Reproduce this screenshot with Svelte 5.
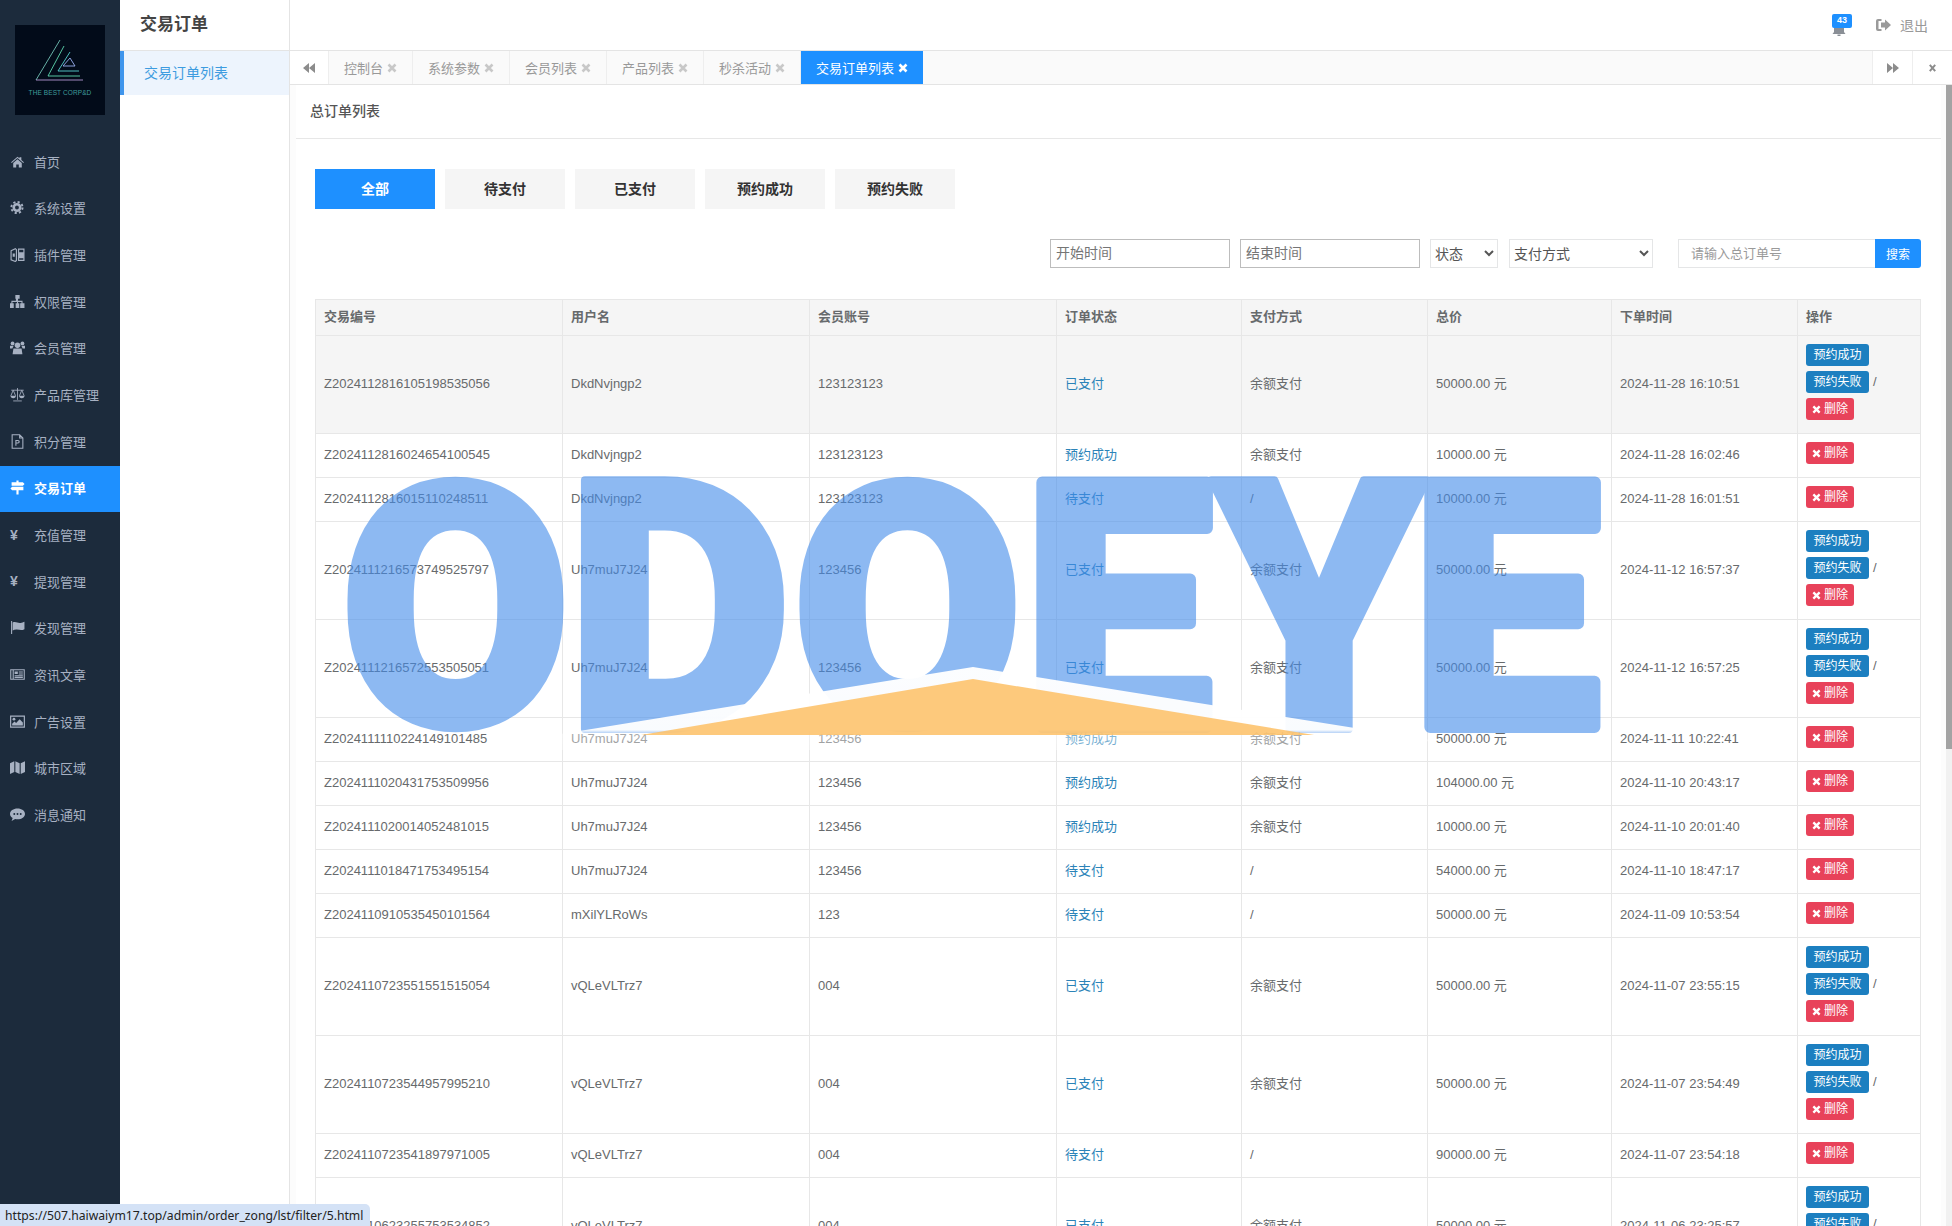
<script>
  const icons = {
    home: '<path d="M1 7.600 7 2.500l1.800 1.500V3h1.800v2.600L13 7.600l-.6.700L7 3.800 1.600 8.300z"/><path d="M3 8.400 7 5l4 3.400V12.500H8.200V9.700H5.800v2.800H3z"/>',
    cog: '<circle cx="6.500" cy="7" r="3" fill="none" stroke="currentColor" stroke-width="2.400"/><circle cx="6.500" cy="7" r="5.200" fill="none" stroke="currentColor" stroke-width="1.800" stroke-dasharray="2 2.080"/>',
    plug: '<path d="M1 3.500 5 1.500l1 1v10l-1 1-4-1.500z M8 2h5v10.500H8z" fill="none" stroke="currentColor" stroke-width="1.100"/><path d="M8 5h5v5.500H8z M2.500 6h2v3h-2z"/>',
    sitemap: '<path d="M5 1h4v3.400H7.500v2h4.200v2.200h1.800V13h-4V8.600h1.200V7.400H7.500v1.200h1.200V13H5.300V8.600h1.200V7.400H2.300v1.200h1.200V13h-4V8.600h1.800V6.400h4.200v-2H5z"/>',
    users: '<circle cx="7" cy="5" r="2.600"/><circle cx="2.400" cy="3.200" r="1.800"/><circle cx="11.600" cy="3.200" r="1.800"/><path d="M3.200 8h7.600l.8 5.200H2.400zM0 5.400h3.400L2.200 8H0zM14 5.400h-3.400L11.800 8H14z"/>',
    scale: '<path d="M7 1v11M3 13h8M1.200 3h11.600M3 3 .8 8.200M3 3l2.200 5.200M11 3 8.800 8.200M11 3l2.200 5.200" fill="none" stroke="currentColor" stroke-width=".8"/><path d="M.5 8.200h5a2.500 2.300 0 0 1-5 0zM8.500 8.200h5a2.500 2.300 0 0 1-5 0z"/>',
    filep: '<path d="M2 .7h7l3 3v9.600H2zM9 .7v3h3" fill="none" stroke="currentColor"/><path d="M5 5.500h2.400a1.600 1.600 0 0 1 0 3.400H6v2H5zM6 6.500v1.400h1.300a.7.7 0 0 0 0-1.400z"/>',
    sign: '<path d="M6 .5h2v1.600h4l1.600 1.600L12 5.300H1.500V2.100H6zM2 6.400h10.500v3.200H8v3.900H6V9.600H2L.4 8z"/>',
    flag: '<path d="M1 1v12h1V1zM2.500 2.300c3-1.400 4.800 1 7.500.4 1-.2 2.500-.7 3.500-1.100v7c-3 1.500-4.800.3-7 .2-1.700-.1-3 .3-4 .9z"/>',
    news: '<path d="M.7 2.500h12.600v9H.7z M3 2.500v9" fill="none" stroke="currentColor"/><path d="M4.300 4.200h3v2.400h-3zM8.200 4.200H12v1H8.200zM8.200 6H12v1H8.200zM4.300 7.800H12v1H4.300zM4.300 9.400H12v.9H4.300z"/>',
    image: '<path d="M.6 2h12.800v10.200H.6z" fill="none" stroke="currentColor" stroke-width="1.100"/><circle cx="3.700" cy="4.800" r="1.300"/><path d="M2 10.800V9l2.200-2 1.500 1.300L9 5l3 3v2.800z"/>',
    map: '<path d="M0 3 4 1.200v10L0 13zM5 1.200l4 1.800v10l-4-1.800zM10 3l4-1.800v10L10 13z"/>',
    chat: '<path d="M7 1.500c3.900 0 7 2.200 7 5s-3.100 5-7 5c-.8 0-1.500-.1-2.200-.3L1.500 13l1-2.700C1 9.400 0 8 0 6.500c0-2.800 3.100-5 7-5z"/><g fill="#1c2b3c"><circle cx="4" cy="6.500" r=".9"/><circle cx="7" cy="6.500" r=".9"/><circle cx="10" cy="6.500" r=".9"/></g>'
  };
  const menu = [
    { t: '首页', i: 'home' }, { t: '系统设置', i: 'cog' }, { t: '插件管理', i: 'plug' },
    { t: '权限管理', i: 'sitemap' }, { t: '会员管理', i: 'users' }, { t: '产品库管理', i: 'scale' },
    { t: '积分管理', i: 'filep' }, { t: '交易订单', i: 'sign', active: true }, { t: '充值管理', y: 1 },
    { t: '提现管理', y: 1 }, { t: '发现管理', i: 'flag' }, { t: '资讯文章', i: 'news' },
    { t: '广告设置', i: 'image' }, { t: '城市区域', i: 'map' }, { t: '消息通知', i: 'chat' }
  ];
  const tabs = ['控制台', '系统参数', '会员列表', '产品列表', '秒杀活动'];
  const filters = ['全部', '待支付', '已支付', '预约成功', '预约失败'];
  const heads = ['交易编号', '用户名', '会员账号', '订单状态', '支付方式', '总价', '下单时间', '操作'];
  const U = 'Uh7muJ7J24', V = 'vQLeVLTrz7', D = 'DkdNvjngp2';
  const rows = [
    ['Z2024112816105198535056', D, '123123123', '已支付', '余额支付', '50000.00', '2024-11-28 16:10:51'],
    ['Z2024112816024654100545', D, '123123123', '预约成功', '余额支付', '10000.00', '2024-11-28 16:02:46'],
    ['Z2024112816015110248511', D, '123123123', '待支付', '/', '10000.00', '2024-11-28 16:01:51'],
    ['Z2024111216573749525797', U, '123456', '已支付', '余额支付', '50000.00', '2024-11-12 16:57:37'],
    ['Z2024111216572553505051', U, '123456', '已支付', '余额支付', '50000.00', '2024-11-12 16:57:25'],
    ['Z2024111110224149101485', U, '123456', '预约成功', '余额支付', '50000.00', '2024-11-11 10:22:41'],
    ['Z2024111020431753509956', U, '123456', '预约成功', '余额支付', '104000.00', '2024-11-10 20:43:17'],
    ['Z2024111020014052481015', U, '123456', '预约成功', '余额支付', '10000.00', '2024-11-10 20:01:40'],
    ['Z2024111018471753495154', U, '123456', '待支付', '/', '54000.00', '2024-11-10 18:47:17'],
    ['Z2024110910535450101564', 'mXilYLRoWs', '123', '待支付', '/', '50000.00', '2024-11-09 10:53:54'],
    ['Z2024110723551551515054', V, '004', '已支付', '余额支付', '50000.00', '2024-11-07 23:55:15'],
    ['Z2024110723544957995210', V, '004', '已支付', '余额支付', '50000.00', '2024-11-07 23:54:49'],
    ['Z2024110723541897971005', V, '004', '待支付', '/', '90000.00', '2024-11-07 23:54:18'],
    ['Z2024110623255753534852', V, '004', '已支付', '余额支付', '50000.00', '2024-11-06 23:25:57']
  ];
  const letters = [
    { c: 'O', x: 340, w: 231, s: 8, f: 339, y: 725 }, { c: 'D', x: 566, w: 226, s: 8, f: 350, y: 729 },
    { c: 'O', x: 792, w: 231, s: 8, f: 339, y: 725 }, { c: 'E', x: 1024, w: 188, s: 12, f: 344, y: 727 },
    { c: 'Y', x: 1212, w: 214, s: 8, f: 350, y: 729 }, { c: 'E', x: 1412, w: 188, s: 12, f: 344, y: 727 }
  ];
</script>

<div class="app">
  <aside class="side">
    <div class="logo">
      <svg viewBox="0 0 90 90" width="90" height="90">
        <rect width="90" height="90" fill="#020b19"/>
        <path d="M45 15 21 55" fill="none" stroke="#7fd8c8" stroke-width=".8"/>
        <path d="M21 55H68" fill="none" stroke="#c8a8e8" stroke-width=".8"/>
        <path d="M49 21 33 51H65" fill="none" stroke="#5fd8b0" stroke-width=".9"/>
        <path d="M55 27 43 46H64" fill="none" stroke="#58d0d0" stroke-width=".9"/>
        <path d="M55 33 48 41H60z" fill="none" stroke="#9ab0f0" stroke-width=".9"/>
        <text x="45" y="70" text-anchor="middle" class="logotext">THE BEST CORP&amp;D</text>
      </svg>
    </div>
    <nav class="menu">
      {#each menu as m}
        <div class="mi" class:active={m.active}>
          {#if m.y}
            <span class="yen">¥</span>
          {:else}
            <svg class="ic" viewBox="0 0 14 14" width="15" height="15" fill="currentColor">{@html icons[m.i]}</svg>
          {/if}
          <span>{m.t}</span>
        </div>
      {/each}
    </nav>
  </aside>

  <div class="sub">
    <div class="subtitle">交易订单</div>
    <div class="subitem">交易订单列表</div>
  </div>

  <div class="main">
    <header class="top">
      <div class="bell">
        <svg viewBox="0 0 14 8" width="14" height="8" fill="#8a8f96"><path d="M2 0h10v4l1.500 2h-13L2 4zM5.500 6.500h3v1.500h-3z"/></svg>
        <span class="badge">43</span>
      </div>
      <div class="logout">
        <svg viewBox="0 0 15 14" width="15" height="14" fill="#9a9a9a"><path d="M5.500 1H2a2 2 0 0 0-2 2v8a2 2 0 0 0 2 2h3.500v-2H2.500V3h3z"/><path d="M5 4.500h4V1.500l6 5.500-6 5.500v-3H5z"/></svg>
        <span>退出</span>
      </div>
    </header>

    <div class="tabs">
      <div class="tabnav">
        <svg viewBox="0 0 12 10" width="12" height="10" fill="#8c8c8c"><path d="M6 0v10L0 5zM12 0v10L6 5z"/></svg>
      </div>
      {#each tabs as t}
        <div class="tab">
          <span>{t}</span>
          <svg class="x" viewBox="0 0 10 10" width="10" height="10"><path d="M1.500 1.500l7 7M8.500 1.500l-7 7" stroke="currentColor" stroke-width="2.600"/></svg>
        </div>
      {/each}
      <div class="tab on">
        <span>交易订单列表</span>
        <svg class="x" viewBox="0 0 10 10" width="10" height="10"><path d="M1.500 1.500l7 7M8.500 1.500l-7 7" stroke="currentColor" stroke-width="2.600"/></svg>
      </div>
      <div class="tabspace"></div>
      <div class="tabend">
        <svg viewBox="0 0 12 10" width="12" height="10" fill="#8c8c8c"><path d="M0 0v10l6-5zM6 0v10l6-5z"/></svg>
      </div>
      <div class="tabend close">
        <svg viewBox="0 0 10 10" width="9" height="10"><path d="M2 1.500l6 7M8 1.500l-6 7" stroke="#8c8c8c" stroke-width="2.200"/></svg>
      </div>
    </div>

    <div class="body">
      <div class="wrap">
        <section class="panel">
          <h2>总订单列表</h2>
          <div class="inner">
            <div class="filters">
              {#each filters as f, i}
                <button class="fbtn" class:sel={i === 0}>{f}</button>
              {/each}
            </div>
            <div class="search">
              <input class="date" placeholder="开始时间" />
              <input class="date" placeholder="结束时间" />
              <select class="s1"><option>状态</option></select>
              <select class="s2"><option>支付方式</option></select>
              <div class="group">
                <input class="kw" placeholder="请输入总订单号" />
                <button class="go">搜索</button>
              </div>
            </div>
            <table>
              <thead>
                <tr>{#each heads as h}<th>{h}</th>{/each}</tr>
              </thead>
              <tbody>
                {#each rows as r, idx}
                  <tr class:tall={r[3] === '已支付'} class:hover={idx === 0}>
                    <td>{r[0]}</td>
                    <td>{r[1]}</td>
                    <td>{r[2]}</td>
                    <td class="st">{r[3]}</td>
                    <td>{r[4]}</td>
                    <td>{r[5]} 元</td>
                    <td>{r[6]}</td>
                    <td class="ops">
                      {#if r[3] === '已支付'}
                        <div class="line"><span class="b blue">预约成功</span></div>
                        <div class="line"><span class="b blue">预约失败</span><span class="sl">/</span></div>
                      {/if}
                      <div class="line"><span class="b red"><svg viewBox="0 0 10 10" width="9" height="9"><path d="M1.500 1.500l7 7M8.500 1.500l-7 7" stroke="#fff" stroke-width="2.600"/></svg>删除</span></div>
                    </td>
                  </tr>
                {/each}
              </tbody>
            </table>
          </div>
        </section>
      </div>
      <div class="track"><div class="thumb"></div></div>
    </div>
  </div>

  <svg class="mark" width="1952" height="1226" viewBox="0 0 1952 1226">
    <defs>
      <linearGradient id="fade" x1="0" y1="667" x2="0" y2="752" gradientUnits="userSpaceOnUse">
        <stop offset="0" stop-color="#fff" stop-opacity=".97"/>
        <stop offset=".74" stop-color="#fff" stop-opacity=".95"/>
        <stop offset=".77" stop-color="#fff" stop-opacity=".45"/>
        <stop offset="1" stop-color="#fff" stop-opacity=".3"/>
      </linearGradient>
    </defs>
    <g opacity=".6" fill="#438ceb" stroke="#438ceb" stroke-linejoin="round">
      {#each letters as l}
        <text class="wm" x={l.x} y={l.y} font-size={l.f} textLength={l.w} lengthAdjust="spacingAndGlyphs" stroke-width={l.s}>{l.c}</text>
      {/each}
    </g>
    <polygon points="973,667 524,740 540,750 1410,750 1430,740" fill="url(#fade)"/>
    <polygon points="973,679 641,735 1314,735" fill="#fdc26a" fill-opacity=".88"/>
  </svg>

  <div class="status">https://507.haiwaiym17.top/admin/order_zong/lst/filter/5.html</div>
</div>

<style>
  :global(body) {
    margin: 0;
    background: #fff;
  }
  .app {
    position: relative;
    display: flex;
    width: 1952px;
    height: 1226px;
    overflow: hidden;
    font-family: "Liberation Sans", "Noto Sans CJK SC", sans-serif;
    font-size: 13px;
    color: #676a6c;
  }
  .side {
    flex: 0 0 120px;
    background: #1c2b3c;
  }
  .logo {
    width: 90px;
    height: 90px;
    margin: 25px 15px 24px;
  }
  .logo svg {
    display: block;
  }
  .logotext {
    font: 6.500px "Liberation Sans", sans-serif;
    fill: #3f9c9c;
    letter-spacing: .1px;
  }
  .mi {
    display: flex;
    align-items: center;
    box-sizing: border-box;
    height: 46.670px;
    padding: 0 0 2px 10px;
    color: #a7b1c2;
  }
  .mi .ic {
    flex: 0 0 15px;
    margin-right: 9px;
  }
  .yen {
    flex: 0 0 15px;
    margin-right: 9px;
    font-weight: bold;
    font-size: 14px;
  }
  .mi.active {
    background: #1e90ff;
    color: #fff;
    font-weight: bold;
  }
  .sub {
    flex: 0 0 169px;
    border-right: 1px solid #e4e4e4;
  }
  .subtitle {
    height: 50px;
    line-height: 50px;
    padding-left: 20px;
    font-size: 17px;
    font-weight: bold;
    color: #444;
    border-bottom: 1px solid #e4e4e4;
  }
  .subitem {
    height: 44px;
    line-height: 44px;
    padding-left: 20px;
    border-left: 4px solid #3f95ec;
    background: #edf4fd;
    color: #3d9ce0;
    font-size: 14px;
  }
  .main {
    flex: 1;
    min-width: 0;
    display: flex;
    flex-direction: column;
  }
  .top {
    flex: 0 0 50px;
    display: flex;
    justify-content: flex-end;
    align-items: center;
    border-bottom: 1px solid #e4e4e4;
  }
  .bell {
    position: relative;
    width: 20px;
    height: 20px;
    margin-right: 24px;
    margin-top: -3px;
  }
  .bell svg {
    position: absolute;
    left: 0;
    top: 14px;
  }
  .badge {
    position: absolute;
    left: 0;
    top: 0;
    width: 20px;
    height: 14px;
    background: #1e90ff;
    color: #fff;
    font-size: 9px;
    font-weight: bold;
    line-height: 13px;
    text-align: center;
    border-radius: 2px;
  }
  .logout {
    display: flex;
    align-items: center;
    gap: 9px;
    margin-right: 24px;
    color: #999;
    font-size: 14px;
  }
  .tabs {
    flex: 0 0 33px;
    box-sizing: border-box;
    display: flex;
    background: #fafafa;
    border-bottom: 1px solid #e4e4e4;
  }
  .tabnav {
    flex: 0 0 39px;
    display: flex;
    align-items: center;
    justify-content: center;
    background: #fff;
    border-right: 1px solid #eee;
    box-sizing: border-box;
  }
  .tab {
    display: flex;
    align-items: center;
    gap: 4px;
    padding: 0 15px;
    border-right: 1px solid #eee;
    color: #999;
    white-space: nowrap;
  }
  .tab .x {
    color: #c8c8c8;
  }
  .tab.on {
    background: #1e90ff;
    color: #fff;
    border-right: 0;
    height: 33px;
  }
  .tab.on .x {
    color: #fff;
  }
  .tabspace {
    flex: 1;
  }
  .tabend {
    flex: 0 0 40px;
    display: flex;
    align-items: center;
    justify-content: center;
    border-left: 1px solid #eee;
    box-sizing: border-box;
    background: #fff;
  }
  .body {
    flex: 1;
    min-height: 0;
    display: flex;
    background: #fcfcfc;
  }
  .wrap {
    flex: 1;
    min-width: 0;
    padding: 0 5px 0 6px;
    overflow: hidden;
  }
  .panel {
    background: #fff;
  }
  h2 {
    height: 53px;
    line-height: 53px;
    margin: 0;
    padding-left: 14px;
    font-size: 14px;
    font-weight: 500;
    color: #555;
    border-bottom: 1px solid #e7e7e7;
  }
  .inner {
    padding: 30px 20px 0 19px;
  }
  .filters {
    display: flex;
    gap: 10px;
  }
  .fbtn {
    width: 120px;
    height: 40px;
    border: 0;
    padding: 0 0 2px;
    background: #f5f5f5;
    color: #333;
    font: bold 14px "Liberation Sans", "Noto Sans CJK SC", sans-serif;
  }
  .fbtn.sel {
    background: #1e90ff;
    color: #fff;
  }
  .search {
    display: flex;
    justify-content: flex-end;
    margin-top: 30px;
    height: 29px;
  }
  input, select {
    box-sizing: border-box;
    height: 29px;
    margin: 0;
    font-family: "Liberation Sans", "Noto Sans CJK SC", sans-serif;
    background: #fff;
    border-radius: 0;
    outline: 0;
  }
  .date {
    width: 180px;
    margin-right: 10px;
    border: 1px solid #bdbdbd;
    padding: 0 5px 2px;
    font-size: 14px;
  }
  .date::placeholder {
    color: #757575;
  }
  select {
    border: 1px solid #e5e6e7;
    font-size: 14px;
    color: #555;
    padding: 0;
  }
  .s1 {
    width: 68px;
    margin-right: 11px;
  }
  .s2 {
    width: 144px;
    margin-right: 25px;
  }
  .group {
    display: flex;
  }
  .kw {
    width: 197px;
    border: 1px solid #e5e6e7;
    border-right: 0;
    padding: 0 12px;
    font-size: 13px;
  }
  .kw::placeholder {
    color: #9a9a9a;
  }
  .go {
    width: 46px;
    height: 29px;
    border: 0;
    padding: 0;
    background: #1e90ff;
    color: #fff;
    font: 12px "Liberation Sans", "Noto Sans CJK SC", sans-serif;
    border-radius: 0 3px 3px 0;
  }
  table {
    width: 1606px;
    margin-top: 31px;
    border-collapse: collapse;
    table-layout: fixed;
  }
  th, td {
    box-sizing: border-box;
    padding: 0 8px 2px;
    border: 1px solid #e7e7e7;
    text-align: left;
    font-size: 13px;
    line-height: 18px;
    white-space: nowrap;
  }
  th {
    height: 36px;
    background: #f5f5f5;
    font-weight: bold;
    color: #676a6c;
  }
  th:nth-child(1), th:nth-child(2), th:nth-child(3) { width: 247px; }
  th:nth-child(4) { width: 185px; }
  th:nth-child(5) { width: 186px; }
  th:nth-child(6) { width: 184px; }
  th:nth-child(7) { width: 186px; }
  td {
    height: 44px;
  }
  tr.tall td {
    height: 98px;
  }
  tr.hover td {
    background: #f5f5f5;
  }
  .st {
    color: #2b83b8;
  }
  td.ops {
    vertical-align: top;
    padding-top: 3px;
  }
  .line {
    display: flex;
    align-items: center;
    margin: 5px 0;
  }
  .b {
    display: inline-flex;
    align-items: center;
    justify-content: center;
    gap: 3px;
    height: 22px;
    border-radius: 3px;
    color: #fff;
    font-size: 12px;
  }
  .blue {
    width: 63px;
    background: #1c7fc0;
  }
  .red {
    width: 48px;
    background: #e8425a;
  }
  .sl {
    margin-left: 4px;
  }
  .track {
    flex: 0 0 6px;
    background: #f1f1f1;
  }
  .thumb {
    height: 664px;
    background: #a3a3a3;
  }
  .mark {
    position: absolute;
    left: 0;
    top: 0;
    pointer-events: none;
  }
  .wm {
    font-family: Roboto, Inter, sans-serif;
    font-weight: 900;
  }
  .status {
    position: absolute;
    left: 0;
    bottom: 0;
    height: 22px;
    line-height: 23px;
    padding: 0 7px 0 5px;
    background: #d4e2f6;
    border-top-right-radius: 5px;
    font-family: "Noto Sans", sans-serif;
    font-size: 12.200px;
    color: #222;
    white-space: nowrap;
  }
</style>
